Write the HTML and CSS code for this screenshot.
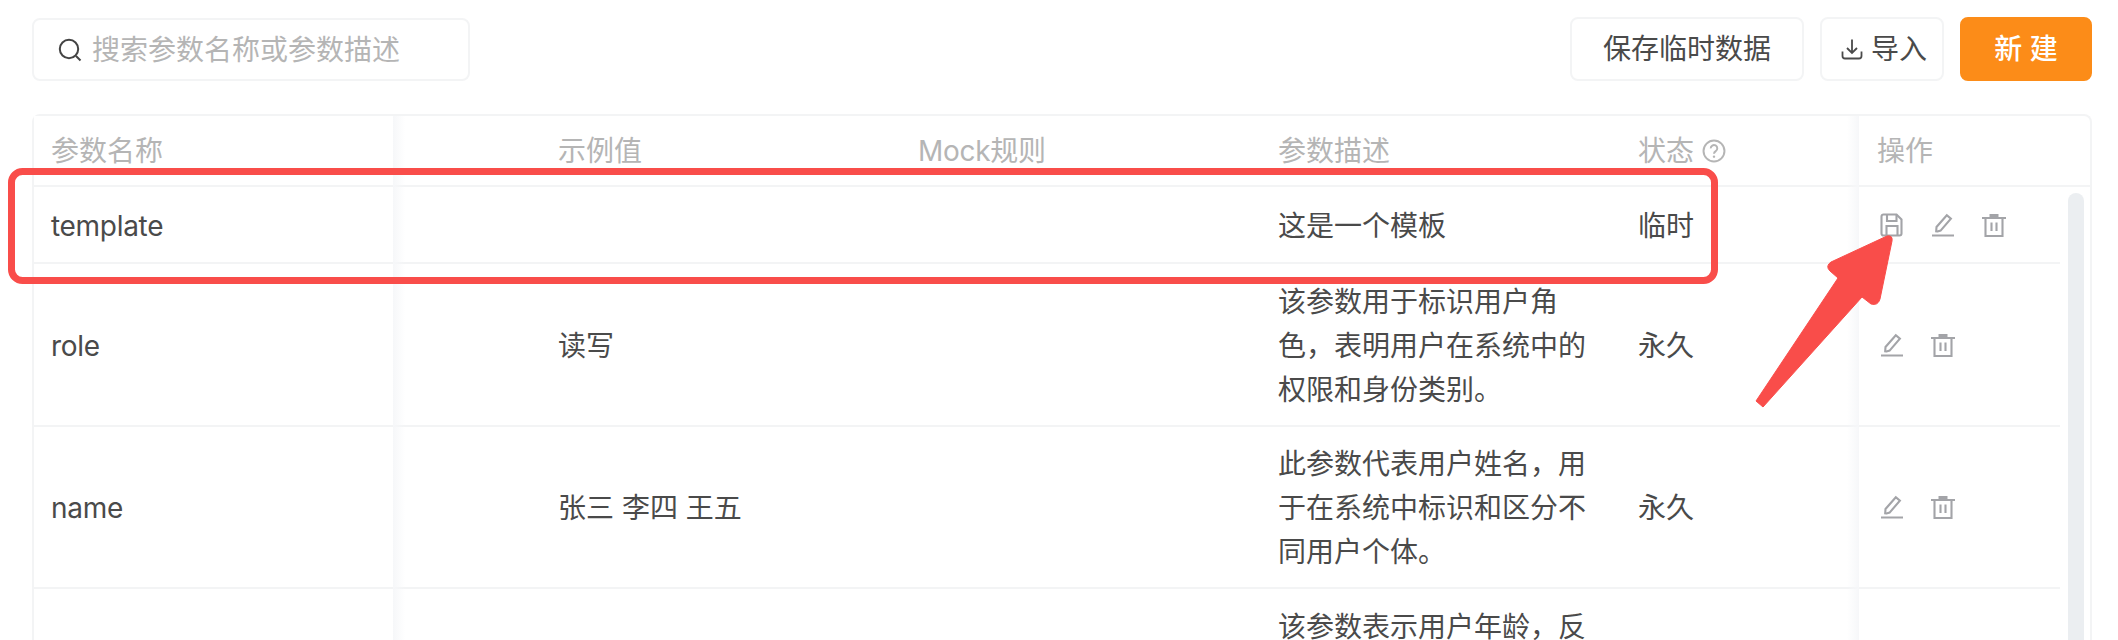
FILE: index.html
```html
<!DOCTYPE html>
<html lang="zh-CN">
<head>
<meta charset="utf-8">
<title>参数</title>
<link rel="stylesheet" href="styles.css">
</head>
<body>
<div class="page">
  <div class="toolbar">
    <div class="search">
      <svg class="search-icon" viewBox="0 0 24 24"><circle cx="11" cy="11" r="9.2"/><path d="M18 18l4.500 4.500"/></svg>
      <span class="placeholder">搜索参数名称或参数描述</span>
    </div>
    <div class="actions">
      <button class="btn">保存临时数据</button>
      <button class="btn btn-import"><svg class="import-icon" viewBox="0 0 22 22"><path d="M11 1.500v13M6 10l5 5 5-5M1.500 13.500v4.500a2.500 2.500 0 0 0 2.500 2.500h14a2.500 2.500 0 0 0 2.500-2.500v-4.500"/></svg><span>导入</span></button>
      <button class="btn btn-primary">新 建</button>
    </div>
  </div>

  <div class="table">
    <div class="row head">
      <div class="cell fixed-left">参数名称</div>
      <div class="cell"></div>
      <div class="cell">示例值</div>
      <div class="cell latin">Mock规则</div>
      <div class="cell">参数描述</div>
      <div class="cell cell-status">状态
        <svg class="help" viewBox="0 0 22 22"><circle cx="11" cy="11" r="9.600"/><path d="M8 8.600a3 3 0 1 1 4.600 2.500c-1 .7-1.600 1.200-1.600 2.400"/><circle class="dot" cx="11" cy="16.200" r="1.100"/></svg>
      </div>
      <div class="cell fixed-right">操作</div>
    </div>

    <div class="row row-short">
      <div class="cell fixed-left latin">template</div>
      <div class="cell"></div>
      <div class="cell"></div>
      <div class="cell"></div>
      <div class="cell">这是一个模板</div>
      <div class="cell cell-status">临时</div>
      <div class="cell fixed-right ops">
        <svg class="op" viewBox="0 0 24 24"><path d="M3.500 1.500h13l5 5v14a2 2 0 0 1-2 2h-16a2 2 0 0 1-2-2v-17a2 2 0 0 1 2-2z"/><path d="M7 1.500v6.500h9.500v-6.500M6.500 22.500v-9.500h11v9.500"/></svg>
        <svg class="op" viewBox="0 0 24 24"><path d="M1 22.500h22M6.500 18.500l-1.300-.1.300-4.400L15.800 2.200l4.100 3.500L9.600 17.600z"/></svg>
        <svg class="op" viewBox="0 0 24 24"><path d="M0 5h24M3.500 5v18h17V5M9.500 9.500v8.500M14.500 9.500v8.500"/><path class="lid" d="M7.500 1h9v3.500h-9z"/></svg>
      </div>
    </div>

    <div class="row row-tall">
      <div class="cell fixed-left latin">role</div>
      <div class="cell"></div>
      <div class="cell">读写</div>
      <div class="cell"></div>
      <div class="cell">该参数用于标识用户角色，表明用户在系统中的权限和身份类别。</div>
      <div class="cell cell-status">永久</div>
      <div class="cell fixed-right ops">
        <svg class="op" viewBox="0 0 24 24"><path d="M1 22.500h22M6.500 18.500l-1.300-.1.300-4.400L15.800 2.200l4.100 3.500L9.600 17.600z"/></svg>
        <svg class="op" viewBox="0 0 24 24"><path d="M0 5h24M3.500 5v18h17V5M9.500 9.500v8.500M14.500 9.500v8.500"/><path class="lid" d="M7.500 1h9v3.500h-9z"/></svg>
      </div>
    </div>

    <div class="row">
      <div class="cell fixed-left latin">name</div>
      <div class="cell"></div>
      <div class="cell">张三 李四 王五</div>
      <div class="cell"></div>
      <div class="cell">此参数代表用户姓名，用于在系统中标识和区分不同用户个体。</div>
      <div class="cell cell-status">永久</div>
      <div class="cell fixed-right ops">
        <svg class="op" viewBox="0 0 24 24"><path d="M1 22.500h22M6.500 18.500l-1.300-.1.300-4.400L15.800 2.200l4.100 3.500L9.600 17.600z"/></svg>
        <svg class="op" viewBox="0 0 24 24"><path d="M0 5h24M3.500 5v18h17V5M9.500 9.500v8.500M14.500 9.500v8.500"/><path class="lid" d="M7.500 1h9v3.500h-9z"/></svg>
      </div>
    </div>

    <div class="row">
      <div class="cell fixed-left"></div>
      <div class="cell"></div>
      <div class="cell"></div>
      <div class="cell"></div>
      <div class="cell cell-top">该参数表示用户年龄，反</div>
      <div class="cell"></div>
      <div class="cell fixed-right"></div>
    </div>

    <div class="scrollbar"></div>
  </div>

  <svg class="annotation" viewBox="0 0 2118 640">
    <rect class="mark-box" x="11.500" y="171.500" width="1703" height="109" rx="11"/>
    <path class="mark-arrow" d="M1756 401 L1763 407 L1862 297 L1871 304 Q1878 306 1880 299 L1892 241 Q1893 235 1887 236 L1831 262 Q1825 266 1830 271 L1838 278 Z"/>
  </svg>
</div>
</body>
</html>
```
FILE: styles.css
```css
* { box-sizing: border-box; }
html, body { margin: 0; height: 640px; overflow: hidden; background: #fff; }
body {
  font-family: Inter, "Noto Sans CJK SC", "Noto Sans", sans-serif;
  font-size: 28px;
  line-height: 44px;
  color: #4a4a4a;
}
.page { position: relative; width: 2118px; height: 640px; overflow: hidden; padding: 17px 26px 0 32px; }

.toolbar { display: flex; justify-content: space-between; align-items: flex-start; height: 64px; }
.search {
  width: 438px; height: 63px; margin-top: 1px; display: flex; align-items: center; gap: 10px;
  padding-left: 24px; border: 2px solid #f3f4f5; border-radius: 8px;
}
.search-icon { width: 24px; height: 24px; fill: none; stroke: #444; stroke-width: 2; }
.placeholder { color: #b5b5b5; padding-top: 1px; }

.actions { display: flex; gap: 16px; }
.btn {
  height: 64px; padding: 0 31px; border: 2px solid #f3f4f5; border-radius: 8px; background: #fff;
  font: inherit; color: inherit; display: flex; align-items: center;
}
.btn-import { padding: 0 15px 0 19px; gap: 8px; }
.import-icon { width: 22px; height: 22px; fill: none; stroke: #4a4a4a; stroke-width: 1.800; }
.btn-primary { width: 132px; justify-content: center; background: #fc8c18; border-color: #fc8c18; color: #fff; font-weight: 500; padding: 0; }

.table {
  position: relative; margin-top: 33px; width: 2060px; height: 600px;
  border: 2px solid #f3f4f5; border-bottom: 0; border-radius: 8px 8px 0 0;
}
.row {
  display: grid; grid-template-columns: 359px 147px 360px 360px 361px 238px 201px;
  width: 2026px; min-height: 162px; border-bottom: 2px solid #f3f4f5;
}
.row.head { width: 100%; min-height: 71px; color: #b5b5b5; }
.row-short { min-height: 77px; }
.row-tall { min-height: 163px; }
.cell { padding: 2px 18px 0; display: flex; align-items: center; position: relative; background: #fff; }
.head .cell { align-items: flex-start; padding-top: 13px; }
.cell-top { align-items: flex-start; padding-top: 16px; }
.fixed-left { padding-left: 17px; }
.cell-status { padding-left: 17px; }
.latin { letter-spacing: -0.3px; }
.fixed-left::after, .fixed-right::before {
  content: ""; position: absolute; top: 0; bottom: -2px; width: 12px; pointer-events: none;
}
.fixed-left::after { left: 100%; background: linear-gradient(90deg, #f6f7f9, rgba(255,255,255,0)); }
.fixed-right::before { right: 100%; background: linear-gradient(270deg, #f6f7f9, rgba(255,255,255,0)); }
.fixed-left, .fixed-right { z-index: 1; }

.help { width: 24px; height: 24px; margin-left: 8px; margin-top: 10px; fill: none; stroke: #b5b5b5; stroke-width: 1.800; flex: none; }
.help .dot { fill: #b5b5b5; stroke: none; }

.ops { gap: 27px; padding: 0 0 0 21px; }
.op { width: 24px; height: 24px; fill: none; stroke: #a3a4a8; stroke-width: 2.100; flex: none; }
.op .lid { fill: #a3a4a8; stroke: none; }

.scrollbar {
  position: absolute; left: 2034px; top: 77px; width: 16px; height: 600px;
  background: #ebeef1; border-radius: 8px 8px 0 0; z-index: 2;
}

.annotation { position: absolute; left: 0; top: 0; width: 2118px; height: 640px; pointer-events: none; z-index: 3; }
.mark-box { fill: none; stroke: #f94d4a; stroke-width: 7; }
.mark-arrow { fill: #f94d4a; stroke: #f94d4a; stroke-width: 1; stroke-linejoin: round; }
```
